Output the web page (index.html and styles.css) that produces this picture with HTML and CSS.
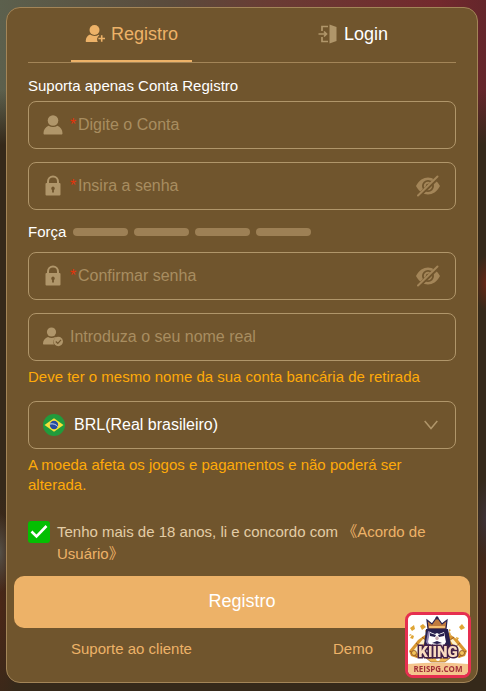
FILE: index.html
```html
<!DOCTYPE html>
<html lang="pt-BR">
<head>
<meta charset="utf-8">
<meta name="viewport" content="width=device-width, initial-scale=1">
<title>Registro</title>
<link rel="stylesheet" href="styles.css">
</head>
<body>
<svg class="sprite" aria-hidden="true">
  <symbol id="eye-off" viewBox="0 0 26 22">
    <path fill="currentColor" fill-rule="evenodd" d="M1 11C4 5.300 8.500 2.500 13 2.500S22 5.300 25 11c-3 5.700-7.500 8.500-12 8.500S4 16.700 1 11zM13 5a6 6 0 1 0 0 12 6 6 0 0 0 0-12z"/>
    <circle cx="13" cy="11" r="3.200" fill="none" stroke="currentColor" stroke-width="2"/>
    <path class="slash-gap" d="M3 21.500 23.500 2"/>
    <path stroke="currentColor" stroke-width="2" stroke-linecap="round" d="M3 20.500 22.500 1.500"/>
  </symbol>
  <symbol id="lock" viewBox="0 0 20 22">
    <path fill="none" stroke="currentColor" stroke-width="2" d="M5 9V6.500a5 5 0 0 1 10 0V9"/>
    <path fill="currentColor" fill-rule="evenodd" d="M3.500 8h13a1 1 0 0 1 1 1v10.500a1 1 0 0 1-1 1h-13a1 1 0 0 1-1-1V9a1 1 0 0 1 1-1zM10 11.500a1.900 1.900 0 0 0-.9 3.500v2.500h1.800V15a1.900 1.900 0 0 0-.9-3.500z"/>
  </symbol>
</svg>

<main class="card">
  <form class="form">
    <nav class="tabs">
      <button type="button" class="tab tab-active">
        <svg class="tab-icon" viewBox="0 0 20 20" aria-hidden="true">
          <circle cx="9.500" cy="6" r="5" fill="currentColor"/>
          <path fill="currentColor" d="M5 10.500c2.500 1.800 6 1.900 8.700.2l.6.500c-2.300 1.800-2.900 4.300-1.500 6.800H1.700c-.7 0-1-.4-1-1.100C.9 14 2.300 11.600 5 10.500z"/>
          <path stroke="currentColor" stroke-width="1.600" d="M16.700 11.200v6.600M13.400 14.500H20"/>
        </svg>
        <span>Registro</span>
      </button>
      <button type="button" class="tab">
        <svg class="tab-icon tab-icon-muted" viewBox="0 0 20 20" aria-hidden="true">
          <path fill="currentColor" d="M11.500.5 18.500 3v14l-7 2.500z"/>
          <path fill="none" stroke="currentColor" stroke-width="1.700" d="M10 2.500H4v4.500M10 17.500H4V13M.5 10H8M6 7.500 8.500 10 6 12.500"/>
        </svg>
        <span>Login</span>
      </button>
    </nav>

    <label class="heading" for="account">Suporta apenas Conta Registro</label>
    <div class="field">
      <svg class="field-icon" viewBox="0 0 20 22" aria-hidden="true">
        <circle cx="10" cy="6.500" r="5.300" fill="currentColor"/>
        <path fill="currentColor" d="M5.500 11.700c2.800 1.700 6.200 1.700 9 0 3.100 1.200 5 4 5 7.500 0 .8-.4 1.300-1.200 1.300H1.700c-.8 0-1.200-.5-1.200-1.300 0-3.500 1.900-6.300 5-7.500z"/>
      </svg>
      <span class="required" aria-hidden="true">*</span>
      <input class="input" id="account" type="text" placeholder="Digite o Conta">
    </div>

    <div class="field">
      <svg class="field-icon" aria-hidden="true"><use href="#lock"/></svg>
      <span class="required" aria-hidden="true">*</span>
      <input class="input" type="password" placeholder="Insira a senha" aria-label="Insira a senha">
      <button type="button" class="reveal" aria-label="Mostrar senha"><svg class="eye" aria-hidden="true"><use href="#eye-off"/></svg></button>
    </div>

    <div class="strength">
      <span class="strength-label">Força</span>
      <i class="bar"></i><i class="bar"></i><i class="bar"></i><i class="bar"></i>
    </div>

    <div class="field">
      <svg class="field-icon" aria-hidden="true"><use href="#lock"/></svg>
      <span class="required" aria-hidden="true">*</span>
      <input class="input" type="password" placeholder="Confirmar senha" aria-label="Confirmar senha">
      <button type="button" class="reveal" aria-label="Mostrar senha"><svg class="eye" aria-hidden="true"><use href="#eye-off"/></svg></button>
    </div>

    <div class="field">
      <svg class="field-icon" viewBox="0 0 20 22" aria-hidden="true">
        <circle cx="8.500" cy="6" r="4.600" fill="currentColor"/>
        <path fill="currentColor" d="M5 11c2.200 1.300 5 1.300 7.300 0l1 .5c-2.700 1.400-3.600 4.300-2.300 7H1c-.7 0-1-.4-1-1C.1 14.500 2 12 5 11z"/>
        <circle cx="15.300" cy="15.500" r="4.700" fill="currentColor"/>
        <path class="icon-cut" d="m12.800 15.500 2 2 3.200-3.600"/>
      </svg>
      <input class="input" type="text" placeholder="Introduza o seu nome real" aria-label="Introduza o seu nome real">
    </div>
    <p class="hint">Deve ter o mesmo nome da sua conta bancária de retirada</p>

    <div class="field">
      <svg class="flag" viewBox="0 0 22 22" aria-hidden="true">
        <circle cx="11" cy="11" r="11" fill="#219b3c"/>
        <path fill="#f5e03b" d="M11 4.200 20.500 11 11 17.800 1.500 11z"/>
        <circle cx="11" cy="11" r="4.200" fill="#2549a0"/>
        <path fill="none" stroke="#dfe9ee" stroke-width=".9" d="M7 10c3-.6 6 .3 7.800 2.600"/>
      </svg>
      <select class="input select" aria-label="Moeda">
        <option>BRL(Real brasileiro)</option>
      </select>
      <svg class="chevron" viewBox="0 0 14 10" aria-hidden="true"><path fill="none" stroke="currentColor" stroke-width="1.500" d="m.7 1 6.300 7.500L13.300 1"/></svg>
    </div>
    <p class="hint">A moeda afeta os jogos e pagamentos e não poderá ser alterada.</p>

    <div class="terms">
      <input class="check" id="terms" type="checkbox" checked>
      <label for="terms">Tenho mais de 18 anos, li e concordo com <a class="link" href="#">《Acordo de Usuário》</a></label>
    </div>

    <button type="submit" class="submit">Registro</button>

    <div class="links">
      <a class="link" href="#">Suporte ao cliente</a>
      <a class="link" href="#">Demo</a>
    </div>
  </form>
</main>

<a class="badge" href="#" aria-label="King">
  <svg class="badge-art" viewBox="0 0 60 60">
    <path fill="#fff" d="M0 0h60v60H0z"/>
    <g fill="#dfa535">
      <path d="m2 13 4-3 1 4-3 2zM12 11l3-2 3 3-4 3zM38 19l4-2 1 3-3 2zM51 12l3-3 3 4-4 2zM4 20l2 1-1 3-3-1zM1 21l1-2 2 1zM17 15l3 1-2 2zM48 22l3 1-2 3zM41 14l2 1-2 2z"/>
    </g>
    <g id="cannon">
      <path fill="#d9972f" d="M3 41 1 36l9-11 7-5 5 3-7 17-6 3z"/>
      <path fill="#fff3cd" d="m5 36 10-12 3 1-9 14z"/>
      <path fill="none" stroke="#8a4f22" stroke-width=".8" d="m2 36 7 6M8 28l6 5M14 22l5 4"/>
      <circle cx="6" cy="38" r="2.500" fill="#f2c55c" stroke="#8a4f22" stroke-width=".8"/>
    </g>
    <use href="#cannon" transform="matrix(-1 0 0 1 60 0)"/>
    <path fill="#28204e" d="M18 14h22l3 16-3 6 2 6H17l3-6-4-6z"/>
    <path fill="#c07a3e" stroke="#28204e" stroke-width="1.200" d="m19 5 5 4 5-7 5 7 5-4-1 9H20z"/>
    <path fill="#f3bd70" d="M21 11h16v2H21z"/>
    <circle cx="29" cy="3" r="1.500" fill="#28204e"/>
    <path fill="#8f81ae" d="m20 16 3 1-1 11 4 7-5-3-3-5z"/>
    <path fill="#fff" d="m22 17 5 2 2-1 2 1 5-2 2 10-5 8h-8l-5-8z"/>
    <path fill="#28204e" d="m22 18 6 2-1 2-5-1zM36 18l-6 2 1 2 5-1zM24 28l5-2 5 2-5 1zM28 30h2v3h-2z"/>
    <path fill="#c8a9b0" d="m27 23 2-2 2 2-1 2h-2z"/>
    <path fill="#f0ba55" stroke="#8a4f22" stroke-width=".6" d="M18 43h24l-5 4H23z"/>
    <circle cx="30" cy="44" r="2" fill="#fff"/>
    <text class="badge-name" x="30" y="42" text-anchor="middle">KIING</text>
    <path fill="#f4c58d" d="M0 49q30-3 60 0v11H0z"/>
    <text class="badge-site" x="30" y="57" text-anchor="middle">REISPG.COM</text>
  </svg>
</a>
</body>
</html>
```

FILE: styles.css
```css
* { box-sizing: border-box; }

body {
  margin: 0;
  padding: 7px 8px 8px 6px;
  min-height: 100vh;
  font-family: "Liberation Sans", Arial, "Noto Sans CJK SC", sans-serif;
  font-size: 15px;
  line-height: 20px;
  color: #fff;
  background:
    radial-gradient(ellipse 12px 40px at 0% 80%, #555047, transparent),
    radial-gradient(ellipse 12px 28px at 100% 41%, #642715, transparent),
    radial-gradient(ellipse 12px 40px at 100% 75%, #3d3237, transparent),
    radial-gradient(ellipse 20px 120px at 0% 88%, #4b2717, transparent),
    radial-gradient(ellipse 20px 90px at 100% 86%, #4b2717, transparent),
    linear-gradient(to bottom, transparent 90px, #35291a 145px),
    linear-gradient(to right, #5c604d, #5a4b3c 35%, #693c34 55%, #73292d 90%, #64262b);
}

button, input, select { font: inherit; color: inherit; }
button { border: 0; padding: 0; background: none; cursor: pointer; }

.sprite { position: absolute; width: 0; height: 0; }

.card {
  border: 1px solid #a38558;
  border-radius: 14px;
  background: #70552d;
}

.form { padding: 0 21px 23px; }

.tabs {
  display: flex;
  gap: 112px;
  height: 55px;
  padding-left: 43px;
  border-bottom: 1px solid #a38558;
  font-size: 18px;
}

.tab {
  display: flex;
  align-items: center;
  gap: 6px;
  padding: 0 14px;
  border-bottom: 2px solid transparent;
}

.tab-active { color: #edb268; border-color: #edb268; }
.tab-icon { width: 20px; height: 20px; }
.tab-icon-muted { color: #b0966a; }

.heading { display: block; margin: 13px 0 5px; }

.field {
  display: flex;
  align-items: center;
  height: 48px;
  margin-bottom: 13px;
  padding: 0 14px;
  border: 1px solid #b0966a;
  border-radius: 8px;
  color: #b0966a;
  font-size: 16px;
}

.field-icon { width: 20px; height: 22px; margin-right: 7px; }
.icon-cut { fill: none; stroke: #70552d; stroke-width: 1.2; }
.slash-gap { fill: none; stroke: #70552d; stroke-width: 4; }
.required { width: 8px; color: #e0340c; }

.input {
  flex: 1;
  min-width: 0;
  height: 100%;
  padding: 0;
  border: 0;
  outline: 0;
  background: transparent;
  color: #fff;
}

.input::placeholder { color: #a88d60; opacity: 1; }
.select { appearance: none; }

.reveal { display: flex; color: #a38558; }
.eye { width: 26px; height: 22px; }
.flag { width: 22px; height: 22px; margin-right: 9px; }
.chevron { width: 14px; height: 10px; margin-right: 3px; }

.strength { display: flex; align-items: center; gap: 6px; margin: -1px 0 10px; }
.strength-label { margin-right: 1px; }
.bar { width: 55px; height: 8px; border-radius: 4px; background: #9d8055; }

.hint { margin: -7px 0 14px; color: #ffaa09; }

.terms {
  display: flex;
  align-items: flex-start;
  gap: 7px;
  margin-top: 26px;
  line-height: 22px;
  color: #e3cda6;
}

.check {
  flex: none;
  appearance: none;
  width: 22px;
  height: 22px;
  margin: 0;
  border-radius: 3px;
}

.check:checked {
  background: #04be02 url("data:image/svg+xml,%3Csvg xmlns='http://www.w3.org/2000/svg' viewBox='0 0 22 22'%3E%3Cpath fill='none' stroke='white' stroke-width='2.600' d='m3.500 10.500 5 5L18.500 5'/%3E%3C/svg%3E");
}

.link { color: #edb268; text-decoration: none; }

.submit {
  display: block;
  width: calc(100% + 28px);
  height: 52px;
  margin: 11px -14px;
  padding-bottom: 2px;
  border-radius: 10px;
  background: #edb268;
  font-size: 18px;
}

.links { display: flex; justify-content: space-between; padding: 0 83px 0 43px; }

.badge {
  position: fixed;
  right: 15px;
  bottom: 13px;
  width: 66px;
  height: 66px;
  border: 3px solid #e62f50;
  border-radius: 8px;
  overflow: hidden;
}

.badge-art { display: block; width: 100%; height: 100%; }
.badge-name { font: 900 15px "Roboto", sans-serif; fill: #f9dcc0; stroke: #432047; stroke-width: 3px; paint-order: stroke; }
.badge-site { font: 700 8px "Open Sans", sans-serif; fill: #a32f39; }
```
